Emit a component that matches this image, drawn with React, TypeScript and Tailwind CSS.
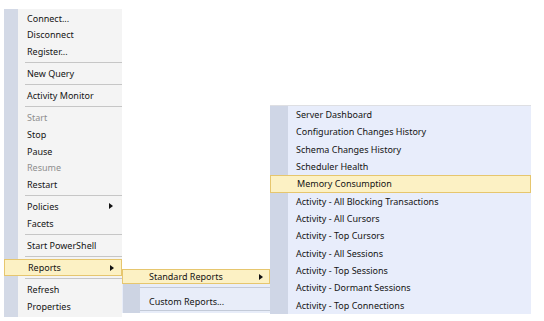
import React from "react";

type Item = { label?: string; sep?: boolean; disabled?: boolean; sub?: boolean; hot?: boolean };

const mainItems: Item[] = [
  { label: "Connect..." },
  { label: "Disconnect" },
  { label: "Register..." },
  { sep: true },
  { label: "New Query" },
  { sep: true },
  { label: "Activity Monitor" },
  { sep: true },
  { label: "Start", disabled: true },
  { label: "Stop" },
  { label: "Pause" },
  { label: "Resume", disabled: true },
  { label: "Restart" },
  { sep: true },
  { label: "Policies", sub: true },
  { label: "Facets" },
  { sep: true },
  { label: "Start PowerShell" },
  { sep: true },
  { label: "Reports", sub: true, hot: true },
  { sep: true },
  { label: "Refresh" },
  { label: "Properties" },
];

const reports = [
  "Server Dashboard",
  "Configuration Changes History",
  "Schema Changes History",
  "Scheduler Health",
  "Memory Consumption",
  "Activity - All Blocking Transactions",
  "Activity - All Cursors",
  "Activity - Top Cursors",
  "Activity - All Sessions",
  "Activity - Top Sessions",
  "Activity - Dormant Sessions",
  "Activity - Top Connections",
];

function Arrow() {
  return (
    <svg width="4" height="6" viewBox="0 0 4 6" className="absolute">
      <path d="M0 0 L4 3 L0 6 Z" fill="#111" />
    </svg>
  );
}

const hotCls = "bg-[#fcf1c4] border border-[#e6c66e]";

export default function App() {
  return (
    <div
      className="relative w-[544px] h-[321px] bg-white overflow-hidden text-[#141414] text-[9px] antialiased"
      style={{ fontFamily: '"Noto Sans", "Open Sans", sans-serif' }}
    >
      {/* main context menu */}
      <div className="absolute left-[4px] top-[9px] w-[118px] h-[308px] bg-[#f4f4f4] flex flex-col pt-[1px]">
        <div className="absolute left-0 top-0 bottom-0 w-[14px] bg-[#d3d9e6]" />
        {mainItems.map((it, i) =>
          it.sep ? (
            <div key={i} className="relative h-[5.4px] flex items-center pl-[21px]">
              <div className="w-full border-t border-[#c6c6c6]" />
            </div>
          ) : (
            <div
              key={i}
              className={`relative h-[16.7px] flex items-center pl-[23px] ${it.hot ? hotCls : ""} ${
                it.disabled ? "text-[#8e8e8e]" : ""
              }`}
            >
              {it.label}
              {it.sub && (
                <span className="absolute left-[105px] top-[5px]">
                  <Arrow />
                </span>
              )}
            </div>
          )
        )}
      </div>

      {/* Reports submenu */}
      <div className="absolute left-[122px] top-[269px] w-[148px] h-[44px] bg-[#e8edf9] flex flex-col">
        <div className="absolute left-[1px] top-0 bottom-0 w-[17px] bg-[#cdd4e3]" />
        <div className={`relative h-[15px] flex items-center pl-[26px] ${hotCls}`}>
          Standard Reports
          <span className="absolute left-[136px] top-[4px]">
            <Arrow />
          </span>
        </div>
        <div className="relative h-[6px] flex items-center pl-[18px]">
          <div className="w-full border-t border-[#c3cad8]" />
        </div>
        <div className="relative h-[20px] flex items-center pl-[27px] pt-[3px]">Custom Reports...</div>
        <div className="relative h-[3px] pl-[18px]">
          <div className="w-full border-t border-[#c3cad8]" />
        </div>
      </div>

      {/* Standard Reports submenu */}
      <div className="absolute left-[270px] top-[105px] w-[261px] h-[209px] bg-[#e8edfb] border-t border-[#dedfe3] flex flex-col">
        <div className="absolute left-0 top-0 bottom-0 w-[18px] bg-[#cfd6e6]" />
        {reports.map((r) => (
          <div
            key={r}
            className={`relative h-[17.35px] flex items-center pl-[26px] ${
              r === "Memory Consumption" ? hotCls : ""
            }`}
          >
            {r}
          </div>
        ))}
      </div>
    </div>
  );
}
